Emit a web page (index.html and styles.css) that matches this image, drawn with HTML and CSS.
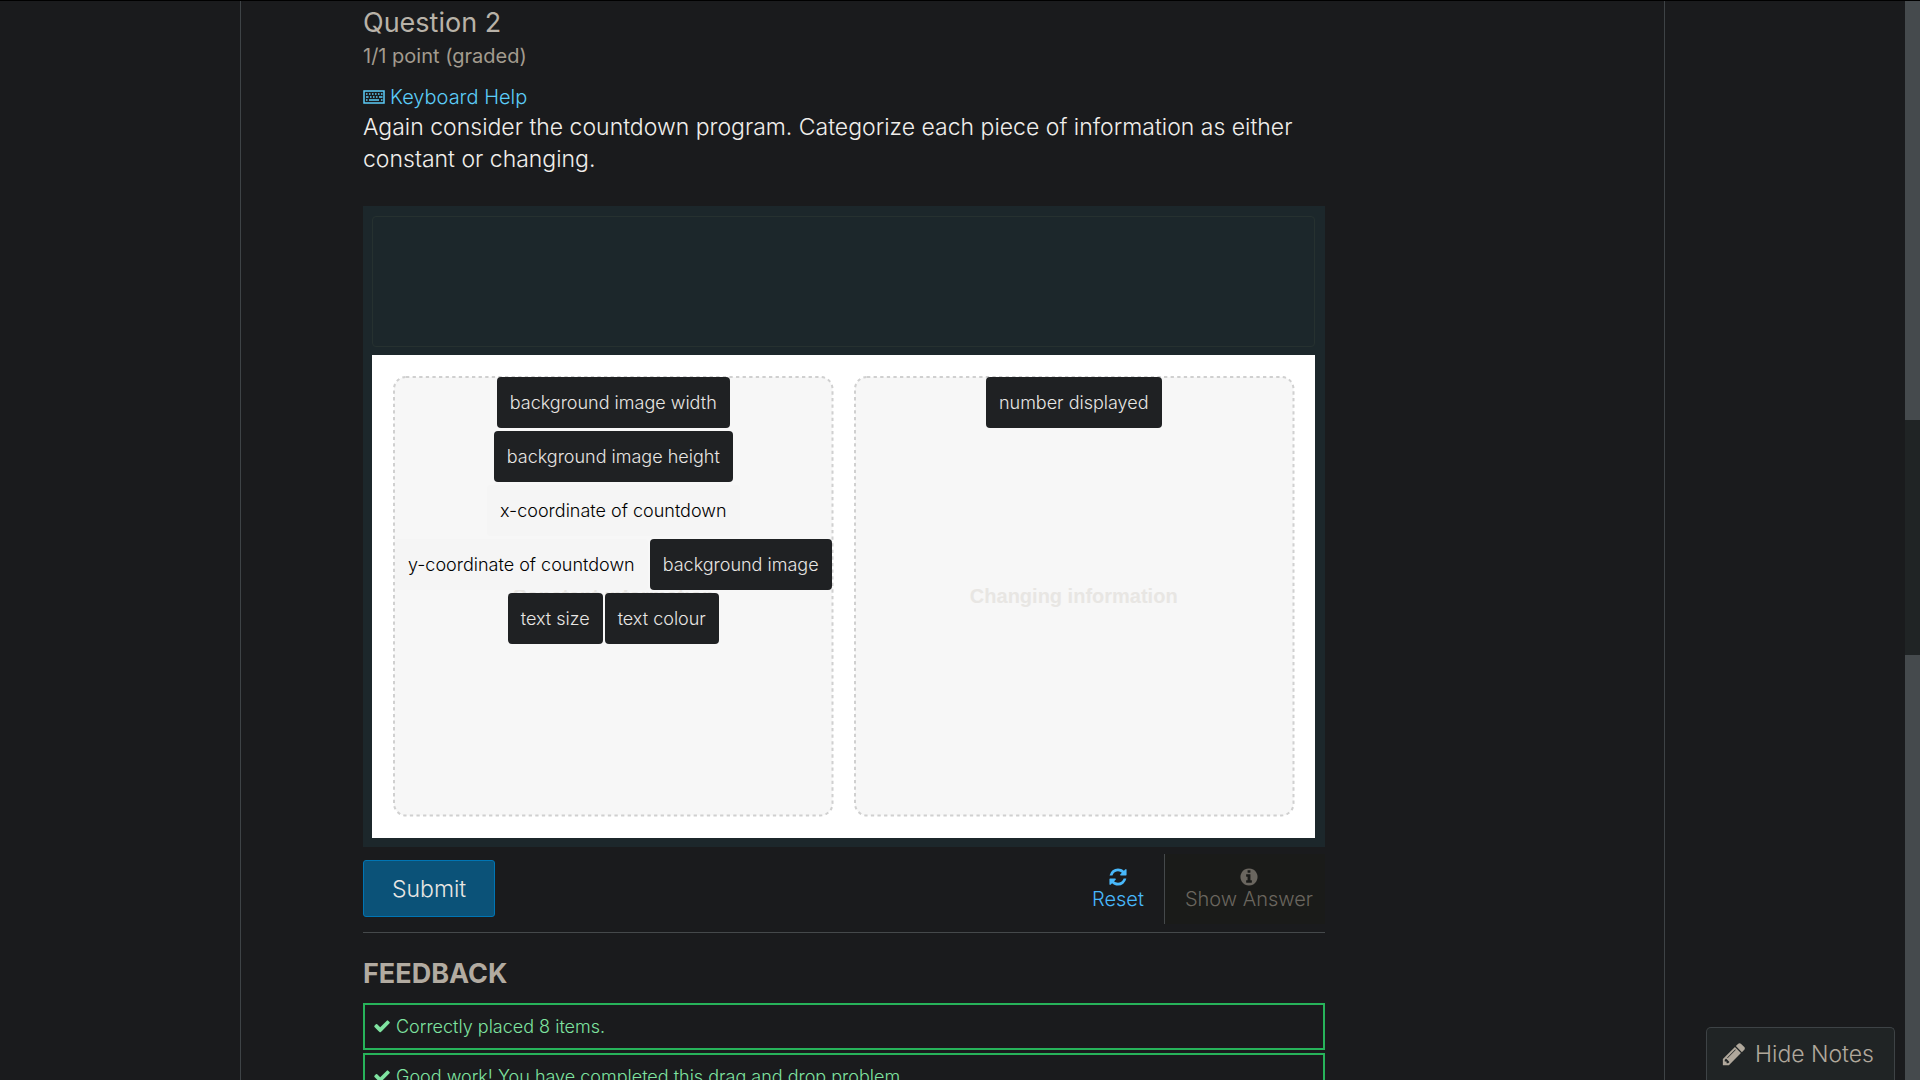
FILE: index.html
```html
<!DOCTYPE html>
<html lang="en">
<head>
<meta charset="utf-8">
<title>Question 2</title>
<link rel="stylesheet" href="styles.css">
</head>
<body>
<div class="viewport">
  <main class="course">
    <section class="problem">
      <h1 class="problem-title">Question 2</h1>
      <p class="progress">1/1 point (graded)</p>
      <a class="keyboard-help" href="#keyboard-help">
        <svg class="keyboard-icon" viewBox="0 0 22 14" aria-hidden="true"><rect x="1" y="1" width="20" height="12" fill="none" stroke="currentColor" stroke-width="1.5"/><path d="M3 4h1.500M6 4h1.500M9 4h1.500M12 4h1.500M15 4h1.500M18 4h1.500M3 7h2.500M7 7h1.500M10 7h1.500M13 7h1.500M16 7h3.500M3 10h1.500M6 10h10M18 10h1.500" fill="none" stroke="currentColor" stroke-width="1.500"/></svg>
        Keyboard Help
      </a>
      <p class="prompt">Again consider the countdown program. Categorize each piece of information as either constant or changing.</p>

      <div class="board">
        <div class="item-bank"></div>
        <div class="target">
          <section class="zone">
            <svg class="zone-outline" aria-hidden="true"><rect width="100%" height="100%" rx="12"/></svg>
            <h2 class="zone-title">Constant information</h2>
            <ul class="items">
              <li class="item">background image width</li>
              <li class="item">background image height</li>
              <li class="item item-light">x-coordinate of countdown</li>
              <li class="item item-light">y-coordinate of countdown</li>
              <li class="item">background image</li>
              <li class="item">text size</li>
              <li class="item">text colour</li>
            </ul>
          </section>
          <section class="zone">
            <svg class="zone-outline" aria-hidden="true"><rect width="100%" height="100%" rx="12"/></svg>
            <h2 class="zone-title">Changing information</h2>
            <ul class="items">
              <li class="item">number displayed</li>
            </ul>
          </section>
        </div>
      </div>

      <div class="actions">
        <button class="submit" type="button">Submit</button>
        <div class="secondary">
          <button class="action" type="button">
            <svg class="action-icon" viewBox="0 0 1792 1792" aria-hidden="true"><path d="M1639 1056q0 5-1 7-64 268-268 434.500t-478 166.500q-146 0-282.500-55t-243.500-157l-129 129q-19 19-45 19t-45-19-19-45v-448q0-26 19-45t45-19h448q26 0 45 19t19 45-19 45l-137 137q71 66 161 102t187 36q134 0 250-65t186-179q11-17 53-117 8-23 30-23h192q13 0 22.500 9.500t9.500 22.500zm25-800v448q0 26-19 45t-45 19h-448q-26 0-45-19t-19-45 19-45l138-138q-148-137-349-137-134 0-250 65t-186 179q-11 17-53 117-8 23-30 23h-199q-13 0-22.500-9.500t-9.500-22.500v-7q65-268 270-434.500t480-166.500q146 0 284 55.500t245 156.500l130-129q19-19 45-19t45 19 19 45z"/></svg>
            Reset
          </button>
          <button class="action action-answer" type="button" disabled>
            <svg class="action-icon" viewBox="0 0 1792 1792" aria-hidden="true"><path d="M1152 1376v-160q0-14-9-23t-23-9h-96v-512q0-14-9-23t-23-9h-320q-14 0-23 9t-9 23v160q0 14 9 23t23 9h96v320h-96q-14 0-23 9t-9 23v160q0 14 9 23t23 9h448q14 0 23-9t9-23zm-128-896v-160q0-14-9-23t-23-9h-192q-14 0-23 9t-9 23v160q0 14 9 23t23 9h192q14 0 23-9t9-23zm640 416q0 209-103 385.500t-279.500 279.500-385.500 103-385.500-103-279.500-279.500-103-385.500 103-385.500 279.500-279.500 385.500-103 385.500 103 279.500 279.500 103 385.500z"/></svg>
            Show Answer
          </button>
        </div>
      </div>

      <h2 class="feedback-title">FEEDBACK</h2>
      <div class="feedback">
        <p class="message"><svg class="check" viewBox="0 0 1792 1792" aria-hidden="true"><path d="M1671 566q0 40-28 68l-724 724-136 136q-28 28-68 28t-68-28l-136-136-362-362q-28-28-28-68t28-68l136-136q28-28 68-28t68 28l294 295 656-657q28-28 68-28t68 28l136 136q28 28 28 68z"/></svg>Correctly placed 8 items.</p>
        <p class="message"><svg class="check" viewBox="0 0 1792 1792" aria-hidden="true"><path d="M1671 566q0 40-28 68l-724 724-136 136q-28 28-68 28t-68-28l-136-136-362-362q-28-28-28-68t28-68l136-136q28-28 68-28t68 28l294 295 656-657q28-28 68-28t68 28l136 136q28 28 28 68z"/></svg>Good work! You have completed this drag and drop problem.</p>
      </div>
    </section>
  </main>
  <div class="scrollbar" aria-hidden="true"><div class="thumb"></div></div>
  <button class="notes" type="button">
    <svg class="pencil" viewBox="0 0 1792 1792" aria-hidden="true"><path d="M491 1536l91-91-235-235-91 91v107h128v128h107zm523-928q0-22-22-22-10 0-17 7l-542 542q-7 7-7 17 0 22 22 22 10 0 17-7l542-542q7-7 7-17zm-54-192l416 416-832 832h-416v-416zm683 96q0 53-37 90l-166 166-416-416 166-165q36-38 90-38 53 0 91 38l235 234q37 39 37 91z"/></svg>
    Hide Notes
  </button>
</div>
</body>
</html>
```
FILE: styles.css
```css
* {
  box-sizing: border-box;
}

body {
  margin: 0;
  background: #1a1b1d;
  color: #f0eeeb;
  font-family: Inter, "Liberation Sans", sans-serif;
  font-weight: 300;
}

h1, h2, p, ul {
  margin: 0;
  padding: 0;
}

button {
  font-family: inherit;
  font-weight: inherit;
  cursor: pointer;
}

svg {
  fill: currentColor;
}

.viewport {
  display: grid;
  grid-template-columns: 1fr 15px;
  grid-template-rows: minmax(0, 1fr);
  height: 100vh;
  overflow: hidden;
  border-top: 1px solid #000;
}

.course {
  width: 75%;
  max-width: 1425px;
  margin: 0 auto;
  padding: 0 122px;
  border: solid #3e4346;
  border-width: 0 1px;
}

.problem {
  max-width: 962px;
}

.problem-title {
  padding-top: 4px;
  font-size: 27px;
  font-weight: 400;
  line-height: 36px;
  color: #b8b2a8;
}

.progress {
  margin-bottom: 12px;
  font-size: 20px;
  font-weight: 400;
  line-height: 30px;
  color: #a39b8f;
}

.keyboard-help {
  display: flex;
  align-items: center;
  gap: 5px;
  width: max-content;
  font-size: 20px;
  line-height: 28px;
  color: #5ccdf8;
  text-decoration: none;
}

.keyboard-icon {
  width: 22px;
  height: 14px;
}

.prompt {
  margin-bottom: 31px;
  font-size: 23px;
  line-height: 32px;
}

.board {
  padding: 10px 10px 9px 9px;
  background: #1c272b;
}

.item-bank {
  height: 131px;
  margin-bottom: 8px;
  border: 1px solid #263130;
  border-radius: 4px;
}

.target {
  display: grid;
  grid-template-columns: 1fr 1fr;
  gap: 20px;
  padding: 21px;
  background: #fff;
}

.zone {
  display: grid;
  aspect-ratio: 1;
  padding: 1px;
}

.zone-outline,
.zone-title,
.items {
  grid-area: 1 / 1;
}

.zone-outline {
  width: 100%;
  height: 100%;
  overflow: visible;
  fill: #f7f7f7;
  stroke: #d0d0d0;
  stroke-width: 2;
  stroke-dasharray: 3.3 3.3;
}

.zone-title {
  align-self: center;
  text-align: center;
  font: bold 20px/24px "Liberation Sans", Arial, sans-serif;
  color: #e8e6e3;
}

.items {
  display: flex;
  flex-wrap: wrap;
  align-content: flex-start;
  justify-content: center;
  gap: 3px 2px;
  list-style: none;
}

.zone-title,
.items {
  position: relative;
}

.item {
  padding: 14px 13px;
  border-radius: 4px;
  background: #1f2123;
  color: #e8e6e3;
  font-size: 18px;
  line-height: 23px;
}

.item-light {
  background: #f5f5f5;
  color: #000;
}

.actions {
  display: flex;
  justify-content: space-between;
  align-items: center;
  padding: 7px 0 8px;
  border-bottom: 1px solid #45494b;
}

.submit {
  padding: 1px 28px 0;
  border: 1px solid #0075b4;
  border-radius: 3px;
  background: #0b5278;
  color: #e8e6e3;
  font-size: 23px;
  line-height: 54px;
}

.secondary {
  display: flex;
}

.action {
  display: flex;
  flex-direction: column;
  align-items: center;
  justify-content: center;
  height: 70px;
  padding: 0 20px;
  border: 0;
  background: none;
  color: #48b8fb;
  font-size: 20px;
  line-height: 24px;
}

.action-icon {
  width: 20px;
  height: 20px;
}

.action-answer {
  padding: 0 12px 0 20px;
  border-left: 1px solid #45494b;
  background: #1a1b19;
  color: #6a665f;
}

.feedback-title {
  margin: 23px 0 11px;
  font-size: 27px;
  font-weight: 700;
  line-height: 36px;
  color: #b2aba1;
}

.feedback {
  display: grid;
  gap: 3px;
}

.message {
  display: flex;
  align-items: center;
  gap: 5px;
  padding: 10px 8px;
  border: 2px solid #27b35a;
  color: #7fe3a0;
  font-size: 18px;
  line-height: 23px;
}

.check {
  width: 18px;
  height: 18px;
}

.scrollbar {
  display: grid;
  grid-template-rows: 419fr 235fr 425fr;
  background: #454a4d;
}

.thumb {
  grid-row: 2;
  background: #202425;
}

.notes {
  position: fixed;
  right: 25px;
  bottom: 0;
  display: flex;
  align-items: center;
  gap: 8px;
  height: 53px;
  padding: 0 20px 0 14px;
  border: 1px solid #3e4346;
  border-bottom: 0;
  border-radius: 5px 5px 0 0;
  background: #202425;
  color: #b0a89c;
  font-size: 23px;
}

.pencil {
  width: 26px;
  height: 26px;
}
```
